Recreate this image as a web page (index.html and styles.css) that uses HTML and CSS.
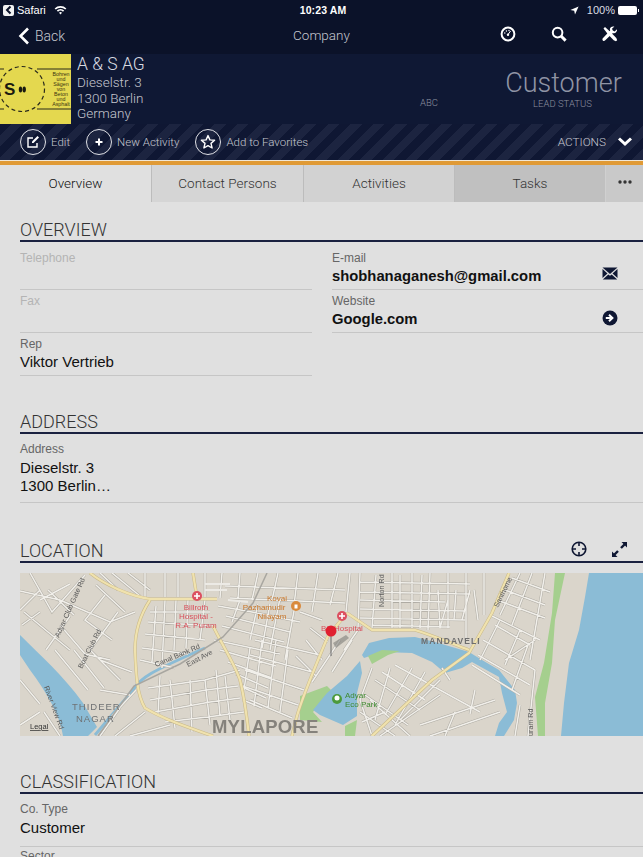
FILE: index.html
```html
<!DOCTYPE html>
<html lang="en">
<head>
<meta charset="utf-8">
<title>Company</title>
<link rel="stylesheet" href="styles.css">
</head>
<body>
<header class="top">
  <div class="status">
    <div class="status-left">
      <span class="back-chip"><svg width="10" height="10" viewBox="0 0 10 10"><path d="M6.5 1.5 3 5l3.5 3.5" class="chip-arrow"/></svg></span>
      <span>Safari</span>
      <svg class="wifi" width="13" height="10" viewBox="0 0 13 10"><path d="M.6 3.4a8.4 8.4 0 0 1 11.8 0l-1.200 1.200a6.700 6.700 0 0 0-9.400 0zM2.800 5.600a5.300 5.300 0 0 1 7.400 0L9 6.800a3.600 3.600 0 0 0-5 0zM5 7.800a2.200 2.200 0 0 1 3 0L6.500 9.400z" class="fill-white"/></svg>
    </div>
    <div class="status-time">10:23 AM</div>
    <div class="status-right">
      <svg width="9" height="9" viewBox="0 0 9 9"><path d="M8.600.4 5 8.600 4.200 4.800.4 4z" class="fill-white"/></svg>
      <span class="pct">100%</span>
      <span class="battery"></span>
    </div>
  </div>
  <nav class="nav">
    <a class="nav-back"><svg width="12" height="18" viewBox="0 0 12 18"><path d="M10 1.500 2.500 9l7.500 7.500" class="stroke-chev"/></svg><span>Back</span></a>
    <div class="nav-title">Company</div>
    <div class="nav-icons">
      <svg width="16" height="16" viewBox="0 0 16 16"><circle cx="8" cy="8" r="6.400" class="stroke-w2"/><path d="M8 8.500 10.600 5" class="stroke-w1"/><circle cx="8" cy="8.800" r="1.200" class="fill-white"/><circle cx="4.800" cy="7" r=".7" class="fill-white"/><circle cx="6.400" cy="5" r=".7" class="fill-white"/><circle cx="9" cy="4.500" r=".7" class="fill-white"/></svg>
      <svg width="16" height="16" viewBox="0 0 16 16"><circle cx="6.600" cy="6.600" r="4.800" class="stroke-w2"/><path d="m10 10 4.600 4.600" class="stroke-w3"/></svg>
      <svg width="16" height="16" viewBox="0 0 16 16"><path d="M1.500 2.500 3 1l5.500 5 5.800 6 .9 2.200-1.300 1-2.200-1-5.800-6z" class="fill-white"/><path d="M15 3.200 12.600 5.600 10.800 4.600 10 2.800 12.400.6c-1.800-.6-3.800 0-4.400 1.800-.2.800-.2 1.600.2 2.200L.8 12.200c-.6.800-.4 1.600 0 2.200.6.600 1.400.8 2.200.2l7.600-7.400c2.200.6 4.800-1.200 4.400-4z" class="fill-white"/></svg>
    </div>
  </nav>
  <section class="band">
    <svg class="logo" width="71" height="70" viewBox="0 0 71 70">
      <rect width="71" height="70" class="logo-bg"/>
      <path d="M37 15h34M37 55h34M0 15h4M0 55h4" class="logo-line"/>
      <circle cx="22" cy="35" r="22.500" class="logo-dash"/>
      <text x="4" y="41" class="logo-s">S</text>
      <ellipse cx="20.500" cy="35.500" rx="1.700" ry="3" class="logo-dot"/>
      <ellipse cx="24.200" cy="35.500" rx="1.700" ry="3" class="logo-dot"/>
      <text class="logo-small" text-anchor="middle"><tspan x="61" y="22">Bohren</tspan><tspan x="61" y="27">und</tspan><tspan x="61" y="32">Sägen</tspan><tspan x="61" y="37">von</tspan><tspan x="61" y="42">Beton</tspan><tspan x="61" y="47">und</tspan><tspan x="61" y="52">Asphalt</tspan></text>
    </svg>
    <div class="company">
      <div class="company-name">A &amp; S AG</div>
      <div>Dieselstr. 3</div>
      <div>1300 Berlin</div>
      <div>Germany</div>
    </div>
    <div class="stat stat-abc"><div class="stat-label">ABC</div></div>
    <div class="stat stat-lead">
      <div class="stat-value">Customer</div>
      <div class="stat-label">LEAD STATUS</div>
    </div>
  </section>
  <section class="actions">
    <a class="action">
      <span class="ring"><svg width="14" height="14" viewBox="0 0 14 14"><path d="M11 8v4H2V3h5" class="stroke-w15"/><path d="m6 6.500 5.500-5.500 1.500 1.500L7.500 8H6z" class="fill-white"/></svg></span>
      <span>Edit</span>
    </a>
    <a class="action">
      <span class="ring"><svg width="10" height="10" viewBox="0 0 10 10"><path d="M5 1.500v7M1.500 5h7" class="stroke-w2"/></svg></span>
      <span>New Activity</span>
    </a>
    <a class="action">
      <span class="ring"><svg width="16" height="16" viewBox="0 0 16 16"><path d="m8 1.600 1.900 4.300 4.700.4-3.600 3.100 1.100 4.600L8 11.600 3.900 14l1.100-4.600-3.600-3.100 4.700-.4z" class="stroke-w15 join"/></svg></span>
      <span>Add to Favorites</span>
    </a>
    <a class="action action-end">
      <span>ACTIONS</span>
      <svg width="16" height="12" viewBox="0 0 16 12"><path d="M2 2.500 8 8l6-5.500" class="stroke-w3"/></svg>
    </a>
  </section>
  <div class="accent"></div>
</header>

<div class="tabs">
  <div class="tab tab-active">Overview</div>
  <div class="tab tab-b">Contact Persons</div>
  <div class="tab tab-c">Activities</div>
  <div class="tab tab-d">Tasks</div>
  <div class="tab-more"><svg width="14" height="4" viewBox="0 0 14 4"><circle cx="2" cy="2" r="1.700" class="fill-dots"/><circle cx="7" cy="2" r="1.700" class="fill-dots"/><circle cx="12" cy="2" r="1.700" class="fill-dots"/></svg></div>
</div>

<main class="content">
  <section class="sec sec-overview">
    <div class="sec-head"><h2>OVERVIEW</h2></div>
    <div class="two">
      <div class="col">
        <div class="field field-empty"><label>Telephone</label></div>
        <div class="field field-empty"><label>Fax</label></div>
        <div class="field"><label>Rep</label><div class="value">Viktor Vertrieb</div></div>
      </div>
      <div class="col">
        <div class="field"><label>E-mail</label>
          <div class="value value-row"><b>shobhanaganesh@gmail.com</b>
            <svg width="16" height="13" viewBox="0 0 16 13"><path d="M.5.500h15L8 7z" class="fill-navy"/><path d="M.5 2v9l5-4.500zM15.500 2v9l-5-4.500zM.8 12.500h14.400L9.700 7.400 8 8.800 6.300 7.400z" class="fill-navy"/></svg>
          </div>
        </div>
        <div class="field"><label>Website</label>
          <div class="value value-row"><b>Google.com</b>
            <svg width="16" height="16" viewBox="0 0 16 16"><circle cx="8" cy="8" r="7.500" class="fill-navy"/><path d="M3.800 8h5M7 4.800 10.400 8 7 11.200" class="stroke-w2"/></svg>
          </div>
        </div>
      </div>
    </div>
  </section>

  <section class="sec sec-address">
    <div class="sec-head"><h2>ADDRESS</h2></div>
    <div class="field field-wide"><label>Address</label><div class="value">Dieselstr. 3<br>1300 Berlin…</div></div>
  </section>

  <section class="sec sec-location">
    <div class="sec-head">
      <h2>LOCATION</h2>
      <div class="sec-tools">
        <svg width="16" height="16" viewBox="0 0 16 16"><circle cx="8" cy="8" r="6.800" class="stroke-navy"/><path d="M8 1v4M8 11v4M1 8h4M11 8h4" class="stroke-navy"/></svg>
        <svg width="17" height="17" viewBox="0 0 17 17"><path d="M10 7l4-4" class="stroke-navy2"/><path d="M10.500 1H16v5.500z" class="fill-navy"/><path d="M7 10l-4 4" class="stroke-navy2"/><path d="M1 10.500V16h5.500z" class="fill-navy"/></svg>
      </div>
    </div>
    <svg class="map" width="623" height="163" viewBox="20 573 623 163">
      <defs>
        <path id="streets" d="M20 591 60 600M60 600 110 622 135 612M30 573 52 612 85 575M48 590 74 615M40 600 70 584M24 612 48 632 70 650M70 616 46 650M60 625 85 654 110 660M96 585 125 612M105 595 85 620 112 640M118 612 90 650 120 680M74 650 104 688M55 650 88 690M20 680 40 704M100 660 132 672M100 690 130 695M112 716 136 690M20 610 40 590M22 625 40 612M100 573 118 590M112 573 140 596M128 573 150 590M145 573 145 597M165 573 165 597M178 573 178 597M205 573 205 597M150 612H210M148 622 214 626M145 634 205 640M142 648 188 654M140 660 175 668M165 600 162 668M176 600 174 650M188 600 186 648M205 600 200 640M156 606 152 662M148 688 205 680 240 670M150 700 206 690 238 686M155 712 210 702 240 698M165 722 215 716 244 712M170 680 175 728M190 680 192 732M205 680 210 725M225 676 230 720M160 676 158 716M216 670 220 716M218 606 252 612 300 622M226 616 290 632M222 626 284 642M214 640 280 654M220 650 276 666M228 662 272 678M236 674 268 688M240 686 266 698M243 700 262 708M240 600 232 622M258 604 250 640M270 604 262 648M280 598 270 650M296 600 285 660M250 648 244 690M262 640 254 706M276 640 268 708M288 650 280 712M255 640 320 655M250 655 312 672M245 670 304 690M240 685 298 705M250 700 292 718M222 573 220 598M240 573 238 598M258 573 252 600M278 573 272 600M298 573 294 605M318 573 312 612M338 573 330 605M225 586 345 590M230 598 345 603M350 573 346 612M300 612 322 620M306 640 322 660M296 656 316 676M310 628 328 642M340 640 312 682M352 640 332 672M358 630 344 650M360 573 358 628M376 575 372 628M392 573 392 628M412 573 412 628M430 573 428 630M448 573 448 628M466 573 466 640M484 573 484 615M360 582 470 584M360 592 470 594M360 600 445 602M360 609 465 611M360 618 465 620M372 625 450 627M400 575 400 628M422 575 420 628M438 590 440 628M456 590 454 620M448 600 440 628M470 590 462 620M474 590 478 620M490 615 540 640M497 600 545 618M505 590 545 605M512 578 550 592M495 625 530 645M520 573 500 615M532 573 512 625M545 573 530 660M483 640 535 670M478 655 530 685M472 665 520 695M500 620 480 660M520 630 505 665M528 645 512 690M535 670 528 736M515 736 520 705M535 640 505 660M372 668 360 700 372 736M390 668 375 720M412 668 385 715M425 672 395 725M440 680 400 720M395 665 440 690M375 680 420 710M382 672 425 700M365 695 408 725M360 712 395 736M370 700 410 736M440 690 480 712M455 712 445 736M420 725 495 700M430 736 500 712M442 668 450 680M475 690 470 714M362 722 385 712M380 736 440 695M20 725 40 712M60 736 44 712M100 736 120 708M115 736 145 712M130 736 170 725"/>
        <path id="roads" d="M90 573C105 585 130 596 150 599H217M193 573 197 598M150 600C140 615 135 630 135 650 136 675 137 695 145 708 165 720 190 728 213 736M213 626C225 650 235 665 240 680 245 700 247 718 249 736M328 636C316 665 303 695 297 716L292 736M509 573 492 613 469 653 432 680 372 736M347 613 372 630H415C435 636 455 645 469 650M347 613 328 636"/>
      </defs>
      <rect x="20" y="573" width="623" height="163" class="m-land"/>
      <path d="M20 635C40 655 63 675 83 703L97 727 88 736H63C60 715 47 693 30 670L20 655z" class="m-water"/>
      <path d="M95 735 133 690C140 678 150 672 205 648" class="m-canal"/>
      <path d="M589 573 585 597 579 630 569 663 564 703 561 736H643V573z" class="m-water"/>
      <path d="M555 573H565L555 620 552 663 545 703 545 736H538L535 697 544 663 552 613z" class="m-green"/>
      <path d="M362 655 369 643 389 638 415 637 435 642 469 652 482 660 499 670 515 690 517 703 514 720 504 736H495L499 723 507 712 502 693 499 677 472 662 462 668 445 673 432 662 412 653 382 652 364 658z" class="m-water"/>
      <path d="M368 656 382 650 400 651 388 655 372 664z" class="m-green"/>
      <path d="M300 696 327 686 331 690 313 712 322 722 300 720zM345 726 357 720 355 736H345z" class="m-green"/>
      <path d="M313 710 327 693 347 676 360 661 362 673 357 693 357 716 343 725 320 715z" class="m-water"/>
      <use href="#streets" class="m-cas"/>
      <use href="#streets" class="m-st"/>
      <use href="#roads" class="m-road-case"/>
      <use href="#roads" class="m-road"/>
      <path d="M267 573 253 603 223 637 180 664 134 686 98 736" class="m-rail"/>
      <path d="M205 584h25M205 590h22M228 600l20 2" class="m-pale"/>
      <circle cx="197" cy="596" r="5" class="m-red"/><path d="M197 593v6M194 596h6" class="m-cross"/>
      <circle cx="342" cy="616" r="5" class="m-red"/><path d="M342 613v6M339 616h6" class="m-cross"/>
      <circle cx="296" cy="606" r="5" class="m-orange"/><rect x="294.500" y="604.500" width="3" height="4" class="m-white"/>
      <circle cx="337" cy="699" r="5" class="m-greendot"/><circle cx="337" cy="698" r="2.500" class="m-white"/>
      <g class="m-t-red">
        <text x="196" y="610" text-anchor="middle">Billroth</text>
        <text x="196" y="619" text-anchor="middle">Hospital -</text>
        <text x="196" y="628" text-anchor="middle">R.A. Puram</text>
        <text x="342" y="631" text-anchor="middle">BS Hospital</text>
      </g>
      <g class="m-t-orange">
        <text x="277" y="601" text-anchor="middle">Kovai</text>
        <text x="264" y="610" text-anchor="middle">Pazhamudir</text>
        <text x="272" y="619" text-anchor="middle">Nilayam</text>
      </g>
      <g class="m-t-green"><text x="345" y="698">Adyar</text><text x="345" y="707">Eco Park</text></g>
      <text x="421" y="644" class="m-t-area">MANDAVELI</text>
      <text x="72" y="710" class="m-t-area2">THIDEER</text>
      <text x="76" y="722" class="m-t-area2">NAGAR</text>
      <text x="212" y="733" class="m-t-big">MYLAPORE</text>
      <g class="m-t-road">
        <text transform="translate(59 638) rotate(-66)">Adyar Club Gate Rd</text>
        <text transform="translate(82 669) rotate(-63)">Boat Club Rd</text>
        <text transform="translate(156 667) rotate(-23)">Canal Bank Rd</text>
        <text transform="translate(188 667) rotate(-28)">East Ave</text>
        <text transform="translate(44 687) rotate(70)">River View Rd</text>
        <text transform="translate(384 607) rotate(-90)">Norton Rd</text>
        <text transform="translate(498 608) rotate(-64)">Santhome</text>
        <text transform="translate(533 736) rotate(-90)">uram Rd</text>
      </g>
      <text x="30" y="729" class="m-t-legal">Legal</text>
      <path d="M333 643 346 635 349 638 336 648z" class="m-shadow"/>
      <path d="M331 636V656" class="m-pin-stem"/>
      <circle cx="331" cy="631" r="5.500" class="m-pin"/>
    </svg>
  </section>

  <section class="sec sec-class">
    <div class="sec-head"><h2>CLASSIFICATION</h2></div>
    <div class="field field-wide"><label>Co. Type</label><div class="value">Customer</div></div>
    <div class="field field-wide field-next"><label>Sector</label></div>
  </section>
</main>
</body>
</html>
```
FILE: styles.css
```css
* { box-sizing: border-box; }
html, body { margin: 0; padding: 0; height: 857px; overflow: hidden; }
body { background: #e0e0e0; font-family: "Liberation Sans", Arial, sans-serif; color: #111; width: 643px; }

.top { background: #0b1229; color: #fff; }
.status { height: 20px; display: grid; grid-template-columns: 1fr auto 1fr; align-items: center; font-size: 11px; padding: 0 2px 0 3px; }
.status-left { display: flex; align-items: center; gap: 3px; }
.status-left .wifi { margin-left: 5px; }
.back-chip { width: 11px; height: 11px; border-radius: 2px; background: #f2f2f2; display: flex; align-items: center; justify-content: center; }
.chip-arrow { fill: none; stroke: #0b1229; stroke-width: 2; }
.status-time { font-weight: 700; font-size: 10.500px; letter-spacing: .1px; padding-left: 2px; }
.status-right { display: flex; align-items: center; justify-content: flex-end; gap: 3px; }
.pct { margin-left: 5px; color: #dcdde2; }
.battery { width: 19px; height: 9px; background: #fff; border-radius: 2px; margin-right: 4px; position: relative; display: block; }
.battery::after { content: ""; position: absolute; left: 20px; top: 3px; width: 1px; height: 3px; background: #fff; }
.fill-white { fill: #fff; }
.m-white { fill: #fff; }
.fill-navy { fill: #0f1733; }
.fill-dots { fill: #333; }
.stroke-chev { fill: none; stroke: #fff; stroke-width: 2.600; }
.stroke-w1 { fill: none; stroke: #fff; stroke-width: 1; }
.stroke-w15 { fill: none; stroke: #fff; stroke-width: 1.400; }
.stroke-w2 { fill: none; stroke: #fff; stroke-width: 2; }
.stroke-w3 { fill: none; stroke: #fff; stroke-width: 3; }
.stroke-navy { fill: none; stroke: #0f1733; stroke-width: 1.600; }
.stroke-navy2 { fill: none; stroke: #0f1733; stroke-width: 2.400; }
.join { stroke-linejoin: round; }

.nav { height: 34px; display: grid; grid-template-columns: 1fr auto 1fr; align-items: center; padding: 0 18px 3px 18px; }
.nav-back { display: flex; align-items: center; gap: 5px; font-family: Roboto, sans-serif; font-weight: 300; font-size: 14px; color: #c5c7cf; }
.nav-title { font-family: Roboto, sans-serif; font-weight: 300; font-size: 13.500px; color: #c5c7cf; padding-bottom: 1px; }
.nav-icons { display: flex; justify-content: flex-end; gap: 35px; padding: 0 7px 3px 0; }

.band { height: 70px; background: #0f1834; display: flex; }
.logo { display: block; flex: none; }
.logo-bg { fill: #e4d84f; }
.logo-line { fill: none; stroke: #2a2a1c; stroke-width: 1.200; }
.logo-dash { fill: none; stroke: #2a2a1c; stroke-width: 1.200; stroke-dasharray: 4 3; }
.logo-s { font-size: 17px; font-weight: 700; fill: #1a1a10; font-family: "Liberation Sans", sans-serif; }
.logo-dot { fill: #1a1a10; }
.logo-small { font-size: 5.300px; fill: #3a3410; font-family: "Liberation Sans", sans-serif; }
.company { margin-left: 6px; font-family: Roboto, sans-serif; font-weight: 300; font-size: 13.500px; line-height: 15.500px; color: #c5c7cf; width: 320px; }
.company-name { font-size: 17.500px; line-height: 21px; color: #d8dae0; }
.stat { display: flex; flex-direction: column; align-items: center; }
.stat-abc { width: 80px; justify-content: flex-end; padding-bottom: 15px; margin-left: -6px; }
.stat-lead { margin-left: 15px; width: 160px; padding-top: 11px; }
.stat-value { font-family: Roboto, sans-serif; font-weight: 300; font-size: 27px; line-height: 36px; color: #8f94a5; }
.stat-label { font-family: Roboto, sans-serif; font-weight: 300; font-size: 9.500px; line-height: 12px; color: #8b8f9f; margin-top: 0; }
.stat-lead .stat-label { margin-top: -3px; margin-right: 2px; }

.actions { height: 36px; display: flex; align-items: center; padding: 0 10px 0 20px; gap: 16px; font-family: Roboto, sans-serif; font-weight: 300; font-size: 11.500px; color: #c5c7cf;
  background: repeating-linear-gradient(135deg, #0f1733 0 8px, #1c2440 8px 16px); }
.action { display: flex; align-items: center; gap: 5px; }
.action-end { margin-left: auto; gap: 11px; font-size: 11.800px; }
.ring { width: 26px; height: 26px; border: 1px solid #dfe0e5; border-radius: 50%; display: flex; align-items: center; justify-content: center; }
.accent { height: 5px; background: #e09a35; border-top: 1px solid #f0e6d5; }

.tabs { height: 37px; display: grid; grid-template-columns: 151px 152px 151px 151px 38px; font-family: Roboto, sans-serif; font-weight: 300; font-size: 13.500px; color: #333; }
.tab { display: flex; align-items: center; justify-content: center; border-left: 1px solid #bcbcbc; padding-bottom: 1px; }
.tab-active { background: #e0e0e0; border-left: 0; color: #111; }
.tab-b { background: #d5d5d5; }
.tab-c { background: #d2d2d2; }
.tab-d { background: #c0c0c0; }
.tab-more { background: #c9c9c9; display: flex; justify-content: center; padding-top: 15px; border-left: 1px solid #d0d0d0; }

.content { padding-left: 20px; }
.sec-head { height: 31px; border-bottom: 2px solid #1a2140; display: flex; align-items: center; justify-content: space-between; padding-top: 9px; }
h2 { margin: 0; font-family: Roboto, sans-serif; font-weight: 300; font-size: 18px; color: #333; line-height: 20px; }
.sec-tools { display: flex; gap: 24px; padding-right: 15px; margin-bottom: 4px; }
.sec-overview { padding-top: 9px; }
.sec-address { margin-top: 27px; }
.sec-location { margin-top: 29px; }
.sec-class { margin-top: 27px; }

.two { display: grid; grid-template-columns: 292px 1fr; column-gap: 20px; padding-top: 5px; }
.field { height: 43px; border-bottom: 1px solid #c6c6c6; padding-top: 9px; }
label { display: block; font-size: 12px; line-height: 14px; color: #666; }
.field-empty label { color: #b4b4b4; }
.value { font-size: 15px; line-height: 18px; color: #111; margin-top: 3px; }
.value-row { display: flex; justify-content: space-between; align-items: flex-start; padding-right: 25px; }
.value b { font-weight: 700; font-size: 14.800px; }
.col .field { padding-top: 4px; }
.col .field .value { margin-top: 2px; }
.sec-address .field { height: 69px; padding-top: 8px; }
.map { display: block; margin-top: 10px; filter: blur(.35px); }
.sec-class .field { height: 53px; padding-top: 8px; }
.sec-class .field-next { padding-top: 2px; }

.m-land { fill: #dad5cb; }
.m-water { fill: #8bbcd6; }
.m-canal { fill: none; stroke: #8bbcd6; stroke-width: 3; }
.m-green { fill: #a5cf8e; }
.m-cas { fill: none; stroke: #aeaba3; stroke-width: 2.500; }
.m-st { fill: none; stroke: #f1efea; stroke-width: 1.500; }
.m-road-case { fill: none; stroke: #c9b988; stroke-width: 3.200; }
.m-road { fill: none; stroke: #f0e2ae; stroke-width: 2.200; }
.m-rail { fill: none; stroke: #a8a6a0; stroke-width: 1.500; }
.m-pale { fill: none; stroke: #eceae5; stroke-width: 2; }
.m-red { fill: #dc5060; }
.m-cross { fill: none; stroke: #fff; stroke-width: 1.600; }
.m-orange { fill: #d98a3c; }
.m-greendot { fill: #4c9a3c; }
.m-t-red text { font: 8px "Liberation Sans", sans-serif; fill: #d8505c; }
.m-t-orange text { font: 8px "Liberation Sans", sans-serif; fill: #c9772a; }
.m-t-green text { font: 8px "Liberation Sans", sans-serif; fill: #3e8a30; }
.m-t-area { font: 700 8.500px "Liberation Sans", sans-serif; fill: #6e6e6e; letter-spacing: 1.100px; }
.m-t-area2 { font: 400 9.500px "Liberation Sans", sans-serif; fill: #6f7274; letter-spacing: 1px; }
.m-t-big { font: 700 18.500px "Liberation Sans", sans-serif; fill: #85827c; letter-spacing: .2px; }
.m-t-road text { font: 7.200px "Liberation Sans", sans-serif; fill: #5a5a5a; }
.m-t-legal { font: 7.500px "Liberation Sans", sans-serif; fill: #333; text-decoration: underline; }
.m-shadow { fill: #7f7e7a; opacity: .6; }
.m-pin-stem { stroke: #666; stroke-width: 1; fill: none; }
.m-pin { fill: #e02030; }
```
